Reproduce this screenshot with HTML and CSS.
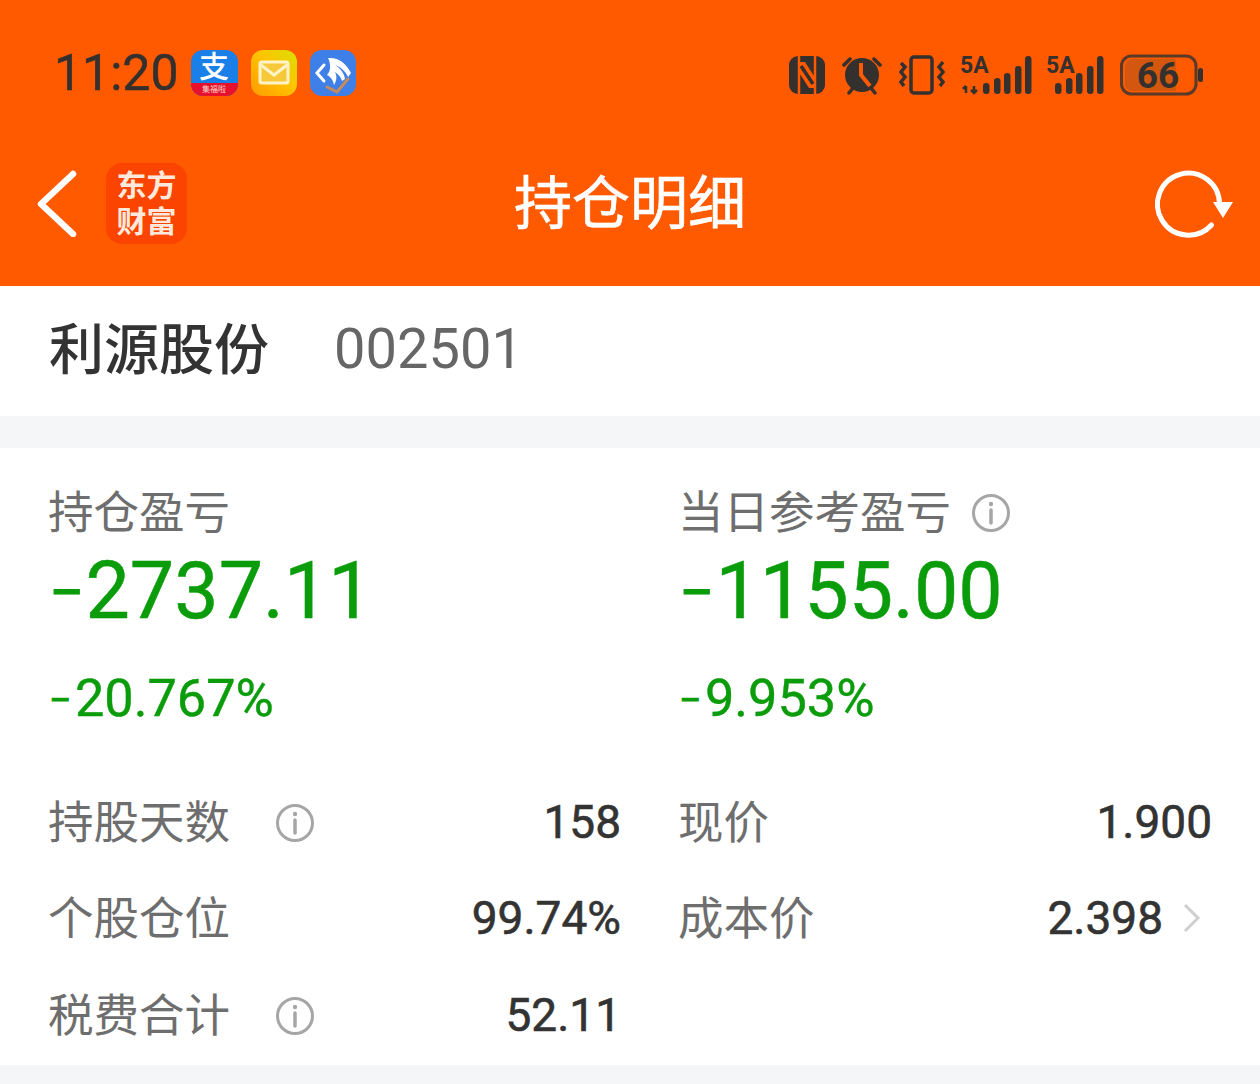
FILE: index.html
```html
<!DOCTYPE html>
<html lang="zh-CN">
<head>
    <meta charset="UTF-8">
    <meta name="viewport" content="width=device-width, initial-scale=1.0">
    <title>持仓明细</title>
    <link rel="stylesheet" href="styles.css">
</head>
<body>
    <header class="header">
        <!-- Status bar -->
        <div class="status-bar">
            <div class="status-left">
                <span class="time">11:20</span>
                <div class="app-icon app-alipay">
                    <span class="alipay-char">支</span>
                    <span class="alipay-band">集福啦</span>
                </div>
                <div class="app-icon app-mail">
                    <svg width="32" height="26" viewBox="0 0 32 26">
                        <rect x="2" y="2" width="28" height="21" rx="2" fill="#f7c93a" stroke="#fff3c8" stroke-width="3"/>
                        <path d="M3 5 L16 15 L29 5" fill="none" stroke="#fff3c8" stroke-width="3"/>
                    </svg>
                </div>
                <div class="app-icon app-wing">
                    <svg width="46" height="46" viewBox="0 0 46 46">
                        <path d="M14 15 L7 23 L14 31" fill="none" stroke="#fff" stroke-width="3" stroke-linecap="round"/>
                        <path d="M18 8 C28 7 36 13 41 23 L38 27 C36 22 31 17 25 15 C31 19 34 23 35 29 L32 31 C31 27 28 24 25 22 C27 26 27 30 24 35 C23 30 21 27 17 25 C21 21 21 14 18 8 Z" fill="#fff"/>
                        <path d="M17 37 L27 42 L38 29" fill="none" stroke="#c98a5a" stroke-width="3" stroke-linecap="round"/>
                    </svg>
                </div>
            </div>
            <div class="status-right">
                <!-- NFC -->
                <svg class="sys-icon" width="38" height="40" viewBox="0 0 38 40">
                    <rect x="1" y="1" width="36" height="38" rx="9" fill="#33302e"/>
                    <path d="M11 -1 V41 M27 -1 V41" stroke="#ff5a00" stroke-width="2.5"/>
                    <path d="M12 7 H17 L26 21 V33 H21 L12 19 Z" fill="#ff5a00"/>
                    <path d="M13 11 L25 29" stroke="#33302e" stroke-width="3.5"/>
                </svg>
                <!-- Alarm -->
                <svg class="sys-icon" width="42" height="40" viewBox="0 0 42 40">
                    <circle cx="21" cy="20" r="17" fill="#33302e"/>
                    <path d="M3 10 L9 4 M39 10 L33 4 M8 38 L12 33 M34 38 L30 33" stroke="#33302e" stroke-width="3.5" stroke-linecap="round"/>
                    <path d="M20 8 V20 L29 31" fill="none" stroke="#ff5a00" stroke-width="4"/>
                </svg>
                <!-- Vibrate -->
                <svg class="sys-icon" width="48" height="40" viewBox="0 0 48 40">
                    <rect x="13" y="2" width="21" height="36" rx="3" fill="none" stroke="#33302e" stroke-width="3.5"/>
                    <path d="M3 8 L7 12 L3 17 L7 22 L3 27 L6 31" fill="none" stroke="#33302e" stroke-width="3.5"/>
                    <path d="M45 7 L41 12 L45 17 L41 22 L45 27 L42 31" fill="none" stroke="#33302e" stroke-width="3.5"/>
                </svg>
                <!-- Signal 1 -->
                <svg class="sys-icon" width="71" height="56" viewBox="0 -8 71 56">
                    <text class="sig-text" x="-1" y="18">5A</text>
                    <path d="M5 31 V38 M2 34 L5 31 M13 31 V38 M10 35 L13 38 L16 35" fill="none" stroke="#33302e" stroke-width="2.5"/>
                    <rect x="22" y="28" width="6.5" height="11" rx="3.2" fill="#33302e"/>
                    <rect x="33" y="23" width="6.5" height="16" rx="3.2" fill="#33302e"/>
                    <rect x="43" y="18" width="6.5" height="21" rx="3.2" fill="#33302e"/>
                    <rect x="54" y="11" width="6.5" height="28" rx="3.2" fill="#33302e"/>
                    <rect x="64" y="1" width="6.5" height="38" rx="3.2" fill="#33302e"/>
                </svg>
                <!-- Signal 2 -->
                <svg class="sys-icon" width="58" height="56" viewBox="0 -8 58 56">
                    <text class="sig-text" x="-1" y="18">5A</text>
                    <rect x="8" y="28" width="6.5" height="11" rx="3.2" fill="#33302e"/>
                    <rect x="19" y="23" width="6.5" height="16" rx="3.2" fill="#33302e"/>
                    <rect x="29" y="18" width="6.5" height="21" rx="3.2" fill="#33302e"/>
                    <rect x="40" y="11" width="6.5" height="28" rx="3.2" fill="#33302e"/>
                    <rect x="50" y="1" width="6.5" height="38" rx="3.2" fill="#33302e"/>
                </svg>
                <!-- Battery -->
                <svg class="sys-icon" width="84" height="42" viewBox="0 0 84 42">
                    <rect x="1.5" y="2" width="74.5" height="38" rx="10" fill="none" stroke="#5a3a28" stroke-width="3"/>
                    <path d="M12 5 H56 V37 H12 A7 7 0 0 1 5 30 V12 A7 7 0 0 1 12 5 Z" fill="#d4570f"/>
                    <text class="bat-text" x="38" y="34" text-anchor="middle">66</text>
                    <rect x="78" y="14" width="5" height="14" rx="2.5" fill="#33302e"/>
                </svg>
            </div>
        </div>

        <!-- Nav bar -->
        <div class="nav-bar">
            <div class="nav-left">
                <svg width="44" height="68" viewBox="0 0 44 68">
                    <path d="M37 5 L5 35 L37 65" fill="none" stroke="#fff" stroke-width="6.5" stroke-linecap="round" stroke-linejoin="round"/>
                </svg>
                <div class="logo">东方<br>财富</div>
            </div>
            <h1 class="nav-title">持仓明细</h1>
            <div class="nav-right">
                <svg width="84" height="76" viewBox="0 0 84 76">
                    <path d="M61.5 60 A31 31 0 1 1 69.5 39" fill="none" stroke="#fff" stroke-width="5" stroke-linecap="round"/>
                    <path d="M63 37 H83 L73 53 Z" fill="#fff"/>
                </svg>
            </div>
        </div>
    </header>

    <!-- Stock name -->
    <div class="stock-row">
        <span class="stock-name">利源股份</span>
        <span class="stock-code">002501</span>
    </div>

    <!-- Position details -->
    <section class="details">
        <div class="summary">
            <div class="col col-left">
                <div class="sum-label">持仓盈亏</div>
                <div class="sum-value"><span class="sign">−</span>2737.11</div>
                <div class="sum-pct"><span class="sign">−</span>20.767%</div>
            </div>
            <div class="col col-right">
                <div class="sum-label">
                    当日参考盈亏
                    <svg class="info info-top" width="40" height="40" viewBox="0 0 40 40"><circle cx="20" cy="20" r="17.5" fill="none" stroke="#a6a6a6" stroke-width="3"/><circle cx="20" cy="11" r="2.2" fill="#a6a6a6"/><path d="M20 17 V30" stroke="#a6a6a6" stroke-width="3.5" stroke-linecap="round"/></svg>
                </div>
                <div class="sum-value"><span class="sign">−</span>1155.00</div>
                <div class="sum-pct"><span class="sign">−</span>9.953%</div>
            </div>
        </div>

        <div class="stats">
            <div class="col col-left">
                <div class="stat">
                    <span class="stat-label">持股天数</span>
                    <svg class="info" width="40" height="40" viewBox="0 0 40 40"><circle cx="20" cy="20" r="17.5" fill="none" stroke="#a6a6a6" stroke-width="3"/><circle cx="20" cy="11" r="2.2" fill="#a6a6a6"/><path d="M20 17 V30" stroke="#a6a6a6" stroke-width="3.5" stroke-linecap="round"/></svg>
                    <span class="stat-value">158</span>
                </div>
                <div class="stat">
                    <span class="stat-label">个股仓位</span>
                    <span class="stat-value">99.74%</span>
                </div>
                <div class="stat">
                    <span class="stat-label">税费合计</span>
                    <svg class="info" width="40" height="40" viewBox="0 0 40 40"><circle cx="20" cy="20" r="17.5" fill="none" stroke="#a6a6a6" stroke-width="3"/><circle cx="20" cy="11" r="2.2" fill="#a6a6a6"/><path d="M20 17 V30" stroke="#a6a6a6" stroke-width="3.5" stroke-linecap="round"/></svg>
                    <span class="stat-value">52.11</span>
                </div>
            </div>
            <div class="col col-right">
                <div class="stat">
                    <span class="stat-label">现价</span>
                    <span class="stat-value">1.900</span>
                </div>
                <div class="stat">
                    <span class="stat-label">成本价</span>
                    <span class="stat-value">2.398</span>
                    <svg class="chevron" width="18" height="32" viewBox="0 0 18 32"><path d="M2 3 L15 16 L2 29" fill="none" stroke="#cfcfcf" stroke-width="3"/></svg>
                </div>
            </div>
        </div>
    </section>

    <div class="footer-gap"></div>
</body>
</html>
```

FILE: styles.css
```css
* {
    box-sizing: border-box;
}
html, body {
    margin: 0;
    padding: 0;
}
body {
    width: 1260px;
    background: #f5f6f8;
    font-family: Roboto, "Noto Sans CJK SC", sans-serif;
    color: #333;
}
.header {
    background: #ff5a00;
    padding-bottom: 26px;
}
.status-bar {
    height: 146px;
    padding: 0 56px 0 54px;
    display: flex;
    justify-content: space-between;
    align-items: center;
}
.status-left {
    display: flex;
    align-items: center;
    gap: 13px;
}
.time {
    margin-right: -1px;
    font-size: 50px;
    color: #33302e;
    -webkit-text-stroke: 0.5px #33302e;
}
.app-icon {
    width: 46px;
    height: 46px;
    border-radius: 12px;
    display: flex;
    align-items: center;
    justify-content: center;
}
.app-alipay {
    width: 47px;
    background: #1a7fe8;
    flex-direction: column;
    justify-content: flex-end;
}
.alipay-char {
    font-size: 30px;
    line-height: 33px;
    font-weight: 500;
    color: #fff;
}
.alipay-band {
    width: 100%;
    height: 13px;
    background: #e8112d;
    border-radius: 0 0 12px 12px;
    color: #ffd6c8;
    font-size: 8px;
    line-height: 13px;
    text-align: center;
}
.app-mail {
    background: linear-gradient(45deg, #ff9a00 0%, #ffc400 55%, #d8e000 100%);
}
.app-wing {
    background: #3f7fe8;
}
.status-right {
    display: flex;
    align-items: center;
    gap: 15px;
    padding-top: 3px;
}
.sig-text {
    font-family: Roboto, sans-serif;
    font-size: 23px;
    font-weight: 700;
    fill: #33302e;
}
.bat-text {
    font-family: Roboto, sans-serif;
    font-size: 37px;
    font-weight: 700;
    fill: #33302e;
}
.nav-bar {
    height: 114px;
    padding: 0 26px;
    display: grid;
    grid-template-columns: 1fr auto 1fr;
    align-items: center;
}
.nav-left {
    display: flex;
    align-items: center;
    gap: 26px;
    padding-left: 10px;
}
.logo {
    width: 81px;
    height: 81px;
    border-radius: 16px;
    background: #fa4400;
    color: #ffe9dc;
    font-size: 30px;
    font-weight: 700;
    line-height: 36px;
    text-align: center;
    padding-top: 5px;
}
.nav-title {
    margin: 0 0 8px;
    font-size: 58px;
    font-weight: 400;
    color: #fff;
    -webkit-text-stroke: 0.6px #fff;
}
.nav-right {
    display: flex;
    justify-content: flex-end;
}
.stock-row {
    height: 130px;
    padding: 0 49px;
    background: #fff;
    display: flex;
    align-items: center;
    gap: 65px;
}
.stock-name {
    margin-bottom: 12px;
    font-size: 55px;
    font-weight: 500;
}
.stock-code {
    margin-bottom: 4px;
    font-size: 56px;
    color: #666;
}
.details {
    margin-top: 32px;
    height: 617px;
    background: #fff;
    padding-top: 34px;
}
.summary, .stats {
    display: grid;
    grid-template-columns: 1fr 1fr;
}
.col-left {
    padding: 0 9px 0 49px;
}
.col-right {
    padding: 0 48px 0 49px;
}
.sum-label {
    margin-left: -1px;
    font-size: 45.5px;
    line-height: 64px;
    color: #6e6e6e;
    display: flex;
    align-items: center;
}
.info-top {
    margin-left: 20px;
    margin-top: -2px;
}
.sum-value {
    font-size: 79px;
    line-height: 90px;
    color: #0a9c0a;
    -webkit-text-stroke: 0.5px #0a9c0a;
}
.sum-value .sign {
    margin-right: 1px;
    font-size: 62px;
    line-height: 0;
    vertical-align: 4px;
    -webkit-text-stroke: 1px #0a9c0a;
}
.sum-pct {
    margin-top: 32px;
    font-size: 52.3px;
    line-height: 60px;
    color: #0a9c0a;
    -webkit-text-stroke: 0.4px #0a9c0a;
}
.sum-pct .sign {
    margin-right: 3px;
    font-size: 40px;
    line-height: 0;
    vertical-align: 2px;
    -webkit-text-stroke: 0.8px #0a9c0a;
}
.stats {
    margin-top: 46px;
}
.stat {
    height: 96.25px;
    display: flex;
    align-items: center;
}
.stat-label {
    margin-left: -1px;
    margin-bottom: 6px;
    font-size: 45.5px;
    color: #6e6e6e;
}
.stat .info {
    margin-left: 45px;
    margin-top: 2px;
}
.stat-value {
    margin-left: auto;
    font-size: 46px;
    color: #333;
    -webkit-text-stroke: 0.6px #333;
}
.chevron {
    margin-left: 20px;
    margin-right: 11px;
}
.footer-gap {
    height: 19px;
}
```
